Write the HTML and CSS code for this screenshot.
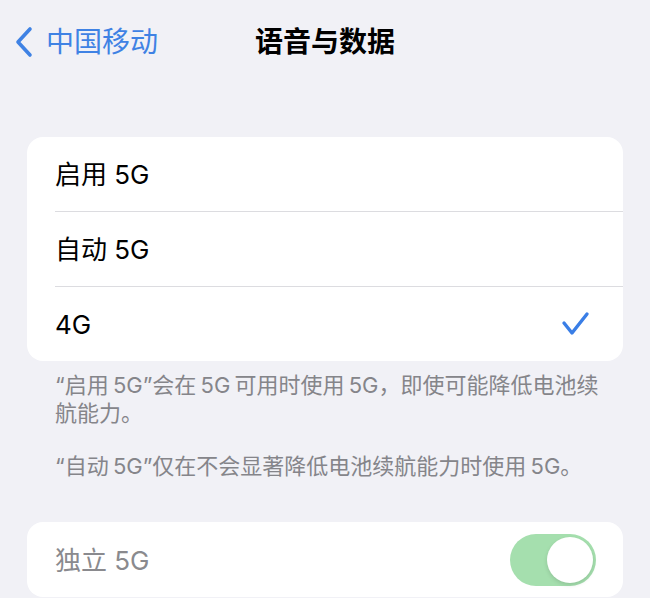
FILE: index.html
```html
<!DOCTYPE html>
<html lang="zh-CN">
<head>
<meta charset="utf-8">
<title>语音与数据</title>
<link rel="stylesheet" href="styles.css">
</head>
<body>
<div class="screen">
  <header class="nav">
    <div class="back">
      <svg class="chev" width="22" height="32" viewBox="0 0 22 32"><path d="M17 3 L5 16 L17 29" fill="none" stroke="#3f82e4" stroke-width="3.6" stroke-linecap="round" stroke-linejoin="round"/></svg>
      <span class="back-text">中国移动</span>
    </div>
    <div class="title">语音与数据</div>
    <div></div>
  </header>

  <section class="card">
    <div class="row"><span class="label">启用 5G</span></div>
    <div class="row"><span class="label">自动 5G</span></div>
    <div class="row"><span class="label">4G</span>
      <svg class="check" width="30" height="28" viewBox="0 0 30 28"><path d="M3 13 L11 23 L26 4" fill="none" stroke="#3a7ee6" stroke-width="3.4" stroke-linecap="round" stroke-linejoin="round"/></svg>
    </div>
  </section>

  <div class="footer">
    <p>“启用 5G”会在 5G 可用时使用 5G，即使可能降低电池续航能力。</p>
    <p>“自动 5G”仅在不会显著降低电池续航能力时使用 5G。</p>
  </div>

  <section class="card card2">
    <div class="row"><span class="label disabled">独立 5G</span>
      <div class="toggle"><div class="knob"></div></div>
    </div>
  </section>
</div>
</body>
</html>
```

FILE: styles.css
```css
html, body {
  margin: 0;
  padding: 0;
  background: #f1f1f6;
}
body {
  font-family: "Inter", "Noto Sans CJK SC", sans-serif;
  width: 650px;
  height: 598px;
  overflow: hidden;
}
.screen {
  display: flex;
  flex-direction: column;
}
.nav {
  height: 84px;
  display: grid;
  grid-template-columns: 1fr auto 1fr;
  align-items: center;
}
.back {
  display: flex;
  align-items: center;
  gap: 11px;
  padding-left: 13px;
}
.chev { display: block; }
.back-text {
  color: #3f82e4;
  font-size: 28px;
  line-height: 1;
}
.title {
  font-size: 28px;
  font-weight: 700;
  color: #000;
  line-height: 1;
}
.card {
  margin: 53px 27px 0;
  background: #fff;
  border-radius: 16px;
  overflow: hidden;
}
.row {
  height: 74px;
  margin-left: 28px;
  padding-right: 32px;
  display: flex;
  align-items: center;
  justify-content: space-between;
  border-top: 1px solid #dcdce0;
}
.row:first-child { border-top: none; }
.label {
  font-size: 26px;
  color: #000;
  line-height: 1;
  padding-top: 2px;
}
.label.disabled { color: #8a8a8e; }
.check { display: block; }
.footer {
  padding: 10px 36px 0 55px;
  color: #85858a;
  font-size: 22px;
  line-height: 28px;
  word-spacing: -2px;
}
.footer p { margin: 0; }
.footer p + p { margin-top: 25px; }
.card2 {
  margin-top: 42px;
}
.card2 .row {
  height: 75px;
  padding-right: 27px;
}
.toggle {
  width: 86px;
  height: 52px;
  border-radius: 26px;
  background: #a5dfae;
  display: flex;
  align-items: center;
  justify-content: flex-end;
  padding: 0 3px;
  box-sizing: border-box;
}
.knob {
  width: 46px;
  height: 46px;
  border-radius: 50%;
  background: #fff;
  box-shadow: 0 2px 4px rgba(0,0,0,0.12);
}
```
